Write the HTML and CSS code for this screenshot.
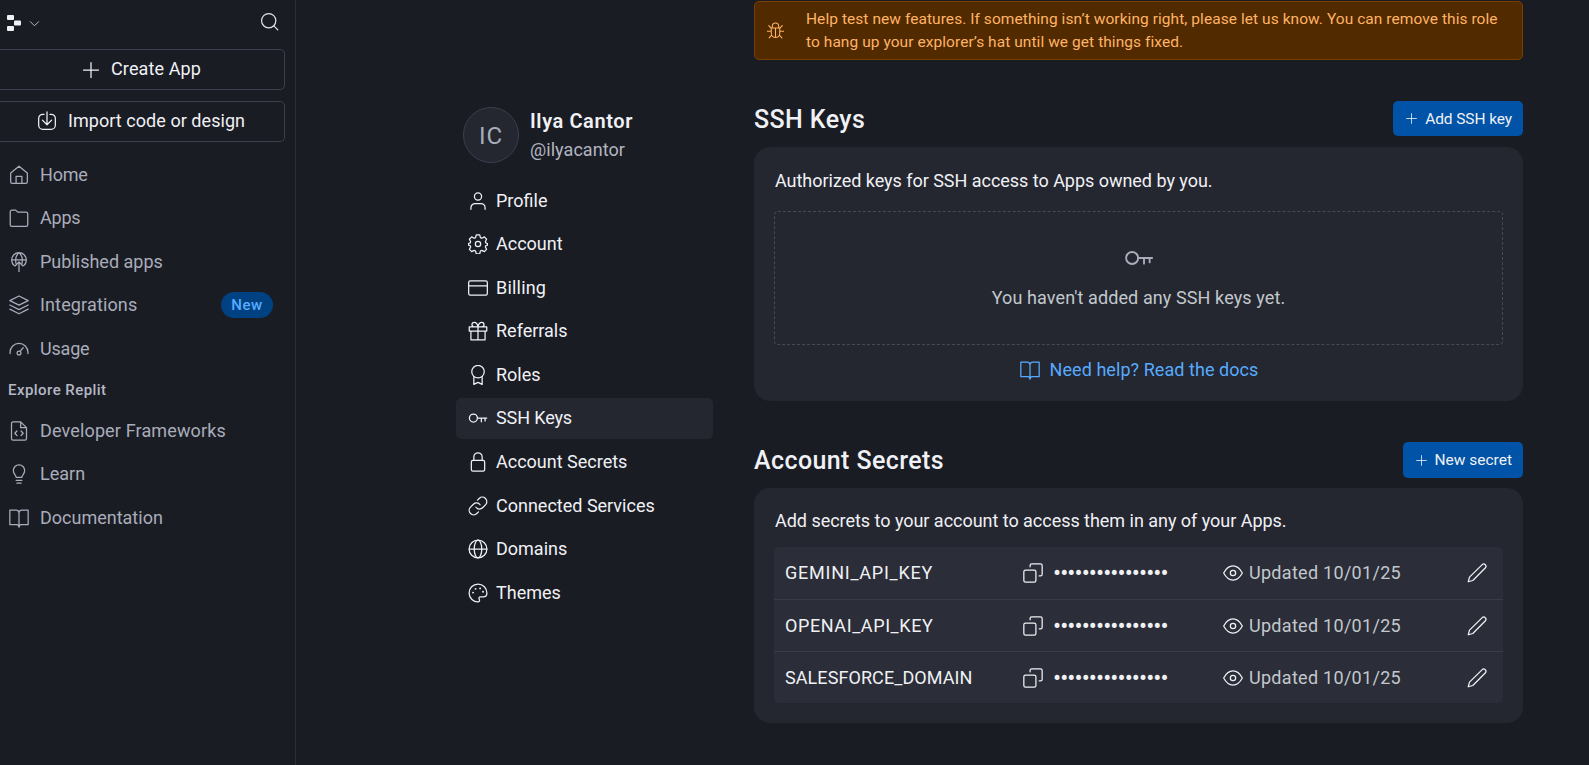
FILE: index.html
```html
<!DOCTYPE html>
<html lang="en">
<head>
<meta charset="utf-8">
<title>Account - Replit</title>
<link rel="stylesheet" href="styles.css">
</head>
<body>
<svg class="sprite" xmlns="http://www.w3.org/2000/svg">
  <symbol id="plus" viewBox="0 0 24 24"><path d="M12 3v18M3 12h18"/></symbol>
  <symbol id="chevron" viewBox="0 0 24 24"><path d="m3 8 9 9 9-9"/></symbol>
  <symbol id="search" viewBox="0 0 24 24"><circle cx="11" cy="11" r="9"/><path d="m17.500 17.500 5 5"/></symbol>
  <symbol id="import" viewBox="0 0 24 24"><path d="M8.500 4H7a5 5 0 0 0-5 5v8a5 5 0 0 0 5 5h10a5 5 0 0 0 5-5V9a5 5 0 0 0-5-5h-1.500M12 1v15.500M6.500 11l5.500 5.500 5.500-5.500"/></symbol>
  <symbol id="home" viewBox="0 0 24 24"><path d="M2 9.500 12 1.500l10 8V20a2 2 0 0 1-2 2H4a2 2 0 0 1-2-2zM8.500 22v-8.500h7V22"/></symbol>
  <symbol id="folder" viewBox="0 0 24 24"><path d="M1.500 4.500a2 2 0 0 1 2-2H8l2.500 2.500h10a2 2 0 0 1 2 2v13a2 2 0 0 1-2 2h-17a2 2 0 0 1-2-2z"/></symbol>
  <symbol id="publish" viewBox="0 0 24 24"><path d="M6.300 16.300A8.800 8.800 0 1 1 17.700 16.300M3.200 9.500h17.600M8.300 13.500C7.600 9 8.500 3.500 12 .8c3.500 2.700 4.400 8.200 3.700 12.700M12 24V12M7.500 16.500 12 12l4.500 4.500"/></symbol>
  <symbol id="layers" viewBox="0 0 24 24"><path d="M12 1.200 1 6.700l11 5.500 11-5.500zM1 12l11 5.500L23 12M1 17l11 5.500L23 17"/></symbol>
  <symbol id="gauge" viewBox="0 0 24 24"><path d="M1.300 17.500V16a10.700 10.700 0 0 1 21.400 0v1.500M13.300 14.800l3.700-4.300"/><circle cx="12" cy="16.800" r="2.300"/></symbol>
  <symbol id="filecode" viewBox="0 0 24 24"><path d="M14 1H5a2 2 0 0 0-2 2v18a2 2 0 0 0 2 2h14a2 2 0 0 0 2-2V8zM14 1v7h7M9.500 12 7 14.700l2.500 2.700M14.500 12l2.500 2.700-2.500 2.700"/></symbol>
  <symbol id="bulb" viewBox="0 0 24 24"><path d="M8.500 16c0-3-3.300-4-3.300-8.200a6.800 6.800 0 0 1 13.600 0C18.800 12 15.500 13 15.500 16zM8.500 19.500h7M9.500 23h5"/></symbol>
  <symbol id="book" viewBox="0 0 24 24"><path d="M12 5.500A3.500 3.500 0 0 0 8.500 2.500H1V20h8a3 3 0 0 1 3 3 3 3 0 0 1 3-3h8V2.500h-7.500A3.500 3.500 0 0 0 12 5.500zM12 5.500V23"/></symbol>
  <symbol id="user" viewBox="0 0 24 24"><circle cx="12" cy="6.500" r="4.300"/><path d="M3.500 22v-2a5 5 0 0 1 5-5h7a5 5 0 0 1 5 5v2"/></symbol>
  <symbol id="gear" viewBox="0 0 24 24"><circle cx="12" cy="12" r="3.200"/><path d="M9.900 1h4.200l.8 3.300 1.700.8 3-1.600 2.700 2.800-1.500 2.900.6 1.500 2 .7v1.900l-2 .7-.6 1.500 1.500 2.900-2.700 2.800-3-1.600-1.700.8-.8 3.300H9.900l-.8-3.300-1.700-.8-3 1.600-2.700-2.800 1.500-2.900-.6-1.500-2-.7v-1.900l2-.7.600-1.500-1.500-2.900 2.700-2.800 3 1.600 1.700-.8z"/></symbol>
  <symbol id="card" viewBox="0 0 24 24"><rect x=".8" y="3.500" width="22.400" height="17" rx="2"/><path d="M1 9.500h22"/></symbol>
  <symbol id="gift" viewBox="0 0 24 24"><path d="M3.500 12v10.500h17V12M1.500 7h21v5h-21zM12 7v15.500M12 7H7.500a2.700 2.700 0 1 1 0-5.500C11 1.500 12 7 12 7zM12 7h4.500a2.700 2.700 0 1 0 0-5.500C13 1.500 12 7 12 7z"/></symbol>
  <symbol id="award" viewBox="0 0 24 24"><circle cx="12" cy="8" r="7.500"/><path d="M7 14v9.300l5-2.500 5 2.500V14"/></symbol>
  <symbol id="key" viewBox="0 0 24 24"><circle cx="6.500" cy="12" r="4.800"/><path d="M11.300 12h11.200M16 12v4.500M20.500 12v3.500"/></symbol>
  <symbol id="lock" viewBox="0 0 24 24"><rect x="4" y="10" width="16" height="13" rx="2"/><path d="M7 10V6a5 5 0 0 1 10 0v4"/></symbol>
  <symbol id="link" viewBox="0 0 24 24"><path d="M9.500 13.500a5.300 5.300 0 0 0 8 .6l3.500-3.500a5.300 5.300 0 0 0-7.600-7.600l-2 2M14.500 10.500a5.300 5.300 0 0 0-8-.6L3 13.400a5.300 5.300 0 0 0 7.600 7.600l2-2"/></symbol>
  <symbol id="globe" viewBox="0 0 24 24"><circle cx="12" cy="12" r="10.700"/><path d="M1.500 12h21"/><ellipse cx="12" cy="12" rx="4.500" ry="10.700"/></symbol>
  <symbol id="palette" viewBox="0 0 24 24"><path d="M12.500 22.700a10.700 10.700 0 1 1 10.200-10.500c0 3-2 4.300-4.500 4.300h-3c-2 0-2.500 1.500-1.700 3 .6 1.200.5 3.200-1 3.200z"/><path d="M6 11.500h.1M9 7h.1M14.500 6.500h.1M18 10.500h.1" stroke-width="2.200"/></symbol>
  <symbol id="copy" viewBox="0 0 24 24"><rect x="1" y="8.500" width="14.500" height="14.500" rx="2"/><path d="M8.500 4.500V3a2 2 0 0 1 2-2H21a2 2 0 0 1 2 2v10.500a2 2 0 0 1-2 2h-1.500"/></symbol>
  <symbol id="eye" viewBox="0 0 24 24"><path d="M.8 12C3.500 7 7 3.500 12 3.500S20.500 7 23.200 12C20.500 17 17 20.500 12 20.500S3.500 17 .8 12z"/><circle cx="12" cy="12" r="3.200"/></symbol>
  <symbol id="pencil" viewBox="0 0 24 24"><path d="M1.500 22.500 3 17 18.300 1.900a2.700 2.700 0 0 1 3.800 3.800L7 21z"/></symbol>
  <symbol id="bug" viewBox="0 0 24 24"><path d="M6 8.500h12V16a6 6 0 0 1-12 0zM7.500 8.500V6a4.500 4.500 0 0 1 9 0v2.500M12 8.500V22M.5 13h5.500M18 13h5.500M6 9 2.500 5M18 9l3.500-4M6.500 18.500 3 22.500M17.500 18.500 21 22.500"/></symbol>
</svg>

<aside class="sidebar">
  <div class="topbar">
    <svg class="logo" viewBox="0 0 14 16"><rect width="7" height="5" rx="1"/><rect x="7" y="5.500" width="7" height="5" rx="1"/><rect y="11" width="7" height="5" rx="1"/></svg>
    <svg class="icon chevron"><use href="#chevron"/></svg>
    <svg class="icon search"><use href="#search"/></svg>
  </div>
  <button class="side-button create"><svg class="icon"><use href="#plus"/></svg><span>Create App</span></button>
  <button class="side-button import"><svg class="icon"><use href="#import"/></svg><span>Import code or design</span></button>
  <nav class="side-nav">
    <a class="tight"><svg class="icon"><use href="#home"/></svg><span>Home</span></a>
    <a class="tight"><svg class="icon"><use href="#folder"/></svg><span>Apps</span></a>
    <a><svg class="icon"><use href="#publish"/></svg><span>Published apps</span></a>
    <a class="loose"><svg class="icon"><use href="#layers"/></svg><span>Integrations</span><b class="badge">New</b></a>
    <a class="tight"><svg class="icon"><use href="#gauge"/></svg><span>Usage</span></a>
  </nav>
  <h2 class="side-title">Explore Replit</h2>
  <nav class="side-nav">
    <a class="loose"><svg class="icon"><use href="#filecode"/></svg><span>Developer Frameworks</span></a>
    <a><svg class="icon"><use href="#bulb"/></svg><span>Learn</span></a>
    <a><svg class="icon"><use href="#book"/></svg><span>Documentation</span></a>
  </nav>
</aside>

<section class="settings">
  <div class="account">
    <div class="avatar">IC</div>
    <div class="who">
      <div class="name">Ilya Cantor</div>
      <div class="handle">@ilyacantor</div>
    </div>
  </div>
  <nav class="settings-nav">
    <a><svg class="icon"><use href="#user"/></svg><span>Profile</span></a>
    <a><svg class="icon"><use href="#gear"/></svg><span>Account</span></a>
    <a class="loose"><svg class="icon"><use href="#card"/></svg><span>Billing</span></a>
    <a><svg class="icon"><use href="#gift"/></svg><span>Referrals</span></a>
    <a><svg class="icon"><use href="#award"/></svg><span>Roles</span></a>
    <a class="active tight"><svg class="icon"><use href="#key"/></svg><span>SSH Keys</span></a>
    <a><svg class="icon"><use href="#lock"/></svg><span>Account Secrets</span></a>
    <a><svg class="icon"><use href="#link"/></svg><span>Connected Services</span></a>
    <a><svg class="icon"><use href="#globe"/></svg><span>Domains</span></a>
    <a><svg class="icon"><use href="#palette"/></svg><span>Themes</span></a>
  </nav>
</section>

<main class="content">
  <div class="banner">
    <svg class="icon"><use href="#bug"/></svg>
    <p>Help test new features. If something isn’t working right, please let us know. You can remove this role<br>to hang up your explorer’s hat until we get things fixed.</p>
  </div>

  <header class="section-head">
    <h1>SSH Keys</h1>
    <button class="primary"><svg class="icon"><use href="#plus"/></svg><span>Add SSH key</span></button>
  </header>
  <section class="card keys">
    <p class="lead">Authorized keys for SSH access to Apps owned by you.</p>
    <div class="empty">
      <svg class="icon"><use href="#key"/></svg>
      <p>You haven't added any SSH keys yet.</p>
    </div>
    <a class="docs"><svg class="icon"><use href="#book"/></svg><span>Need help? Read the docs</span></a>
  </section>

  <header class="section-head secrets-head">
    <h1>Account Secrets</h1>
    <button class="primary loose"><svg class="icon"><use href="#plus"/></svg><span>New secret</span></button>
  </header>
  <section class="card secrets">
    <p class="lead">Add secrets to your account to access them in any of your Apps.</p>
    <div class="table">
      <div class="row"><span class="secret wide">GEMINI_API_KEY</span><svg class="icon"><use href="#copy"/></svg><span class="dots">••••••••••••••••</span><svg class="icon eye"><use href="#eye"/></svg><span class="date">Updated 10/01/25</span><svg class="icon edit"><use href="#pencil"/></svg></div>
      <div class="row"><span class="secret wider">OPENAI_API_KEY</span><svg class="icon"><use href="#copy"/></svg><span class="dots">••••••••••••••••</span><svg class="icon eye"><use href="#eye"/></svg><span class="date">Updated 10/01/25</span><svg class="icon edit"><use href="#pencil"/></svg></div>
      <div class="row"><span class="secret">SALESFORCE_DOMAIN</span><svg class="icon"><use href="#copy"/></svg><span class="dots">••••••••••••••••</span><svg class="icon eye"><use href="#eye"/></svg><span class="date">Updated 10/01/25</span><svg class="icon edit"><use href="#pencil"/></svg></div>
    </div>
  </section>
</main>
</body>
</html>
```
FILE: styles.css
```css
* { box-sizing: border-box; }
body {
  margin: 0;
  width: 1589px;
  height: 765px;
  overflow: hidden;
  display: flex;
  background: #1a1c24;
  color: #f0f1f5;
  font: 18px/24px Roboto, sans-serif;
}
.sprite { position: absolute; width: 0; height: 0; }
.icon {
  width: 20px;
  height: 20px;
  flex: none;
  fill: none;
  stroke: currentColor;
  stroke-width: 1.5;
  stroke-linecap: round;
  stroke-linejoin: round;
}
h1, h2, p { margin: 0; }
button { font: inherit; color: inherit; background: none; border: 0; padding: 0; }
span, p { white-space: nowrap; }

/* Left sidebar */
.sidebar { width: 296px; flex: none; border-right: 1px solid #2b2d38; }
.topbar { height: 49px; display: flex; align-items: center; padding: 0 16px 3px 7px; }
.logo { width: 14px; height: 16px; fill: #f0f1f5; }
.chevron { width: 11px; height: 11px; margin: 1px 0 0 8px; stroke-width: 2; color: #c2c8cc; }
.search { margin: -3px 0 0 auto; width: 19px; height: 19px; color: #e4e6ee; }
.side-button {
  display: flex;
  align-items: center;
  width: 285px;
  height: 41px;
  padding-bottom: 2px;
  border: 1px solid #3c3f4d;
  border-left: 0;
  border-radius: 0 5px 5px 0;
}
.side-button .icon { margin-top: 2px; }
.create { padding-left: 81px; gap: 10px; letter-spacing: .12px; }
.import { padding-left: 37px; gap: 11px; margin-top: 11px; letter-spacing: .05px; }
.import .icon { margin-top: 0; }
.side-nav { color: #a9adba; margin-top: 11.400px; }
.side-nav a { display: flex; align-items: center; height: 43.400px; padding-left: 9px; gap: 11px; }
.side-nav .tight { letter-spacing: -.2px; }
.side-nav .loose { letter-spacing: .14px; }
.badge {
  margin-left: auto;
  margin-right: 22px;
  width: 52px;
  height: 26px;
  border-radius: 13px;
  background: #004182;
  color: #57abff;
  font-size: 15px;
  line-height: 26px;
  font-weight: 500;
  text-align: center;
  letter-spacing: .55px;
}
.side-title {
  height: 39px;
  padding-left: 8px;
  color: #b5b8c4;
  font-size: 15px;
  line-height: 41px;
  font-weight: 500;
  letter-spacing: .45px;
}
.side-title + .side-nav { margin-top: 0; }

/* Account settings menu */
.settings { width: 257px; flex: none; margin-left: 160px; padding-top: 107px; }
.account { display: flex; gap: 11px; padding-left: 7px; }
.avatar {
  width: 56px;
  height: 56px;
  border: 1px solid #3c3f4d;
  border-radius: 50%;
  background: #242630;
  color: #a9adba;
  font-size: 24px;
  line-height: 56px;
  text-align: center;
  letter-spacing: 1px;
}
.name { font-size: 20px; line-height: 29px; font-weight: 600; letter-spacing: .6px; }
.handle { line-height: 27px; color: #b2b5c1; letter-spacing: .06px; }
.settings-nav { margin-top: 17px; display: grid; gap: 2.600px; font-weight: 450; }
.settings-nav a { display: flex; align-items: center; height: 41px; padding-left: 12px; gap: 8px; border-radius: 5px; }
.settings-nav .active { background: #242630; }
.settings-nav .tight { letter-spacing: -.12px; }
.settings-nav .loose { letter-spacing: .2px; }

/* Main column */
.content { width: 769px; flex: none; margin-left: 41px; padding-top: 1px; }
.banner {
  display: flex;
  align-items: center;
  height: 59px;
  padding-left: 12px;
  gap: 22px;
  border: 1px solid #7a3f00;
  border-radius: 5px;
  background: #522a00;
  color: #ffb366;
  font-size: 15.500px;
  line-height: 23px;
  letter-spacing: .06px;
}
.banner .icon { width: 17px; height: 17px; }
.section-head { display: flex; justify-content: space-between; height: 35px; margin-top: 41px; }
h1 { font-size: 25px; line-height: 37px; font-weight: 500; letter-spacing: .4px; }
.primary {
  display: flex;
  align-items: center;
  padding: 0 11px 0 12px;
  gap: 7px;
  border-radius: 5px;
  background: #0053a6;
  font-size: 15.500px;
  font-weight: 450;
  letter-spacing: -.1px;
}
.primary.loose { letter-spacing: 0; }
.primary .icon { width: 13px; height: 13px; }
.card { margin-top: 11px; padding: 0 20px 0 21px; border-radius: 16px; background: #242630; }
.keys { height: 254px; }
.lead { padding-top: 22px; letter-spacing: -.03px; }
.empty {
  height: 134px;
  margin-top: 18px;
  margin-left: -1px;
  border: 1px dashed #464956;
  border-radius: 4px;
  text-align: center;
  color: #c2c8cc;
  padding-top: 31px;
  line-height: 24px;
  letter-spacing: .1px;
}
.empty .icon { display: block; width: 30px; height: 30px; margin: 0 auto 13px; color: #a9adba; }
.docs { display: flex; justify-content: center; align-items: center; gap: 10px; margin-top: 13px; color: #57abff; letter-spacing: .06px; }
.secrets-head { height: 36px; margin-top: 41px; }
.secrets { height: 235px; margin-top: 10px; }
.secrets .lead { padding-top: 21px; }
.table { margin: 14px 0 0 -1px; border-radius: 5px; background: #2b2d38; }
.row { display: flex; align-items: center; height: 52px; padding: 0 16px 0 11px; }
.row + .row { border-top: 1px solid #383b48; }
.secret { width: 238px; letter-spacing: .08px; }
.secret.wide { letter-spacing: .76px; }
.secret.wider { letter-spacing: .59px; }
.dots { width: 149px; margin-left: 10px; font-size: 24px; letter-spacing: -.930px; }
.row .eye { margin-left: 21px; }
.date { margin-left: 6px; color: #c2c8cc; letter-spacing: .29px; }
.edit { margin-left: auto; }
```
